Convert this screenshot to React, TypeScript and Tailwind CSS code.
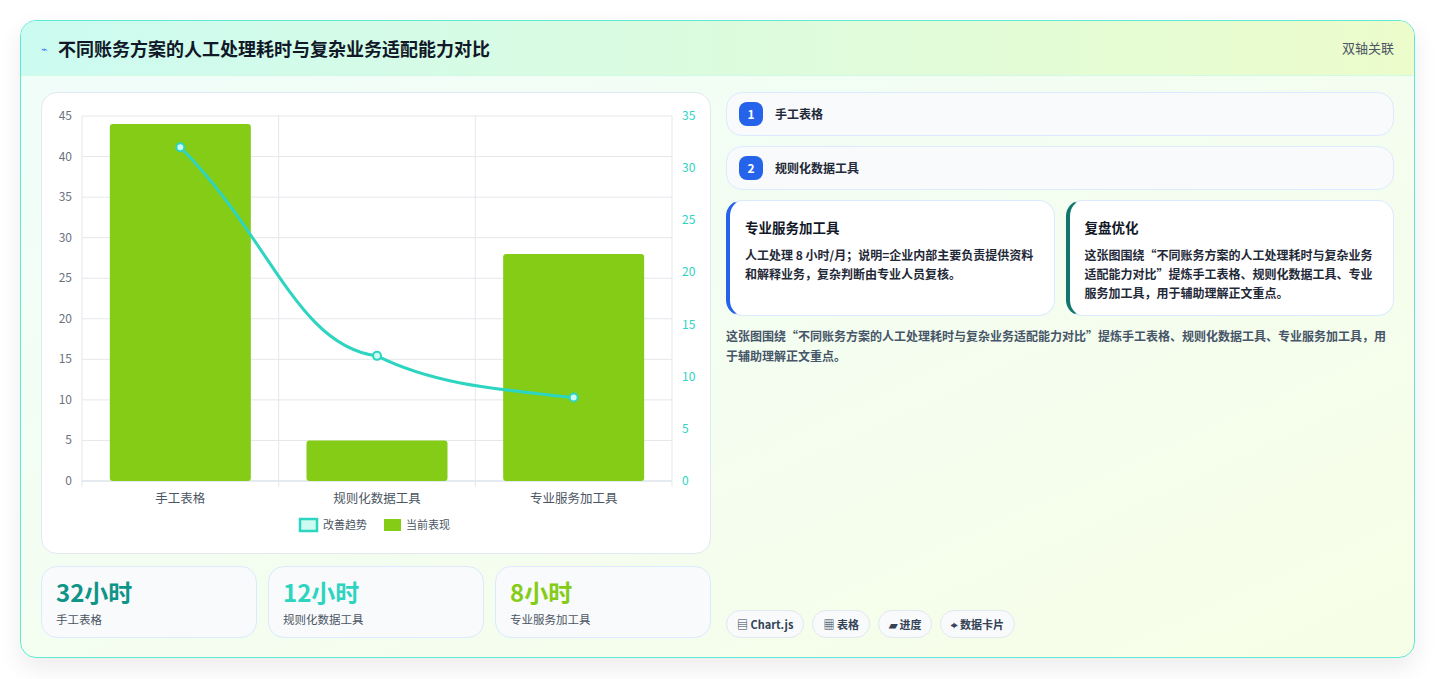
const font = { fontFamily: '"Noto Sans CJK SC", "Noto Sans", sans-serif' };

const Chart = () => {
  const x0 = 40, x1 = 630, yb = 388, yt = 23;
  const ly = (v: number) => yb - (v / 45) * (yb - yt);
  const ry = (v: number) => yb - (v / 35) * (yb - yt);
  const cats = ["手工表格", "规则化数据工具", "专业服务加工具"];
  const bars = [44, 5, 28];
  const line = [32, 12, 8];
  const cw = (x1 - x0) / 3;
  const cx = (i: number) => x0 + cw * i + cw / 2;
  const pts = line.map((v, i) => [cx(i), ry(v)]);
  return (
    <svg width="670" height="462" className="block">
      {[0, 5, 10, 15, 20, 25, 30, 35, 40, 45].map((v) => (
        <g key={v}>
          <line x1={x0} x2={x1} y1={ly(v)} y2={ly(v)} stroke={v === 0 ? "#cbd5e1" : "#e5e7eb"} />
          <text x={x0 - 10} y={ly(v) + 4} textAnchor="end" fontSize="12" fill="#6b7280" style={font}>{v}</text>
        </g>
      ))}
      {[0, 5, 10, 15, 20, 25, 30, 35].map((v) => (
        <text key={v} x={x1 + 10} y={ry(v) + 4} fontSize="12" fill="#2dd4bf" style={font}>{v}</text>
      ))}
      {[0, 1, 2, 3].map((i) => (
        <line key={i} x1={x0 + cw * i} x2={x0 + cw * i} y1={yt} y2={yb + 6} stroke="#e5e7eb" />
      ))}
      {bars.map((v, i) => (
        <rect key={i} x={cx(i) - 70.5} y={ly(v)} width="141" height={yb - ly(v)} rx="3" fill="#84cc16" />
      ))}
      <path
        d={`M${pts[0][0]},${pts[0][1]} C${pts[0][0] + 90},${pts[0][1] + 90} ${pts[1][0] - 80},${pts[1][1] - 10} ${pts[1][0]},${pts[1][1]} C${pts[1][0] + 60},${pts[1][1] + 30} ${pts[2][0] - 70},${pts[2][1] - 8} ${pts[2][0]},${pts[2][1]}`}
        fill="none" stroke="#2dd4bf" strokeWidth="3"
      />
      {pts.map((p, i) => (
        <circle key={i} cx={p[0]} cy={p[1]} r="4" fill="#ccfbf1" stroke="#2dd4bf" strokeWidth="2" />
      ))}
      {cats.map((c, i) => (
        <text key={c} x={cx(i)} y={410} textAnchor="middle" fontSize="12.5" fill="#4b5563" style={font}>{c}</text>
      ))}
      <rect x="258" y="426" width="17" height="12" fill="#ccfbf1" stroke="#2dd4bf" strokeWidth="2.5" />
      <text x="281" y="436" fontSize="11" fill="#4b5563" style={font}>改善趋势</text>
      <rect x="342" y="426" width="17" height="12" fill="#84cc16" />
      <text x="364" y="436" fontSize="11" fill="#4b5563" style={font}>当前表现</text>
    </svg>
  );
};

export default function App() {
  const stats = [
    { v: "32小时", l: "手工表格", c: "text-[#0f9488]" },
    { v: "12小时", l: "规则化数据工具", c: "text-[#2dd4bf]" },
    { v: "8小时", l: "专业服务加工具", c: "text-[#84cc16]" },
  ];
  return (
    <div className="w-[1435px] h-[679px] bg-white pt-5 px-5" style={font}>
      <div className="h-[638px] rounded-2xl border border-[#5eead4] overflow-hidden bg-gradient-to-br from-[#f0fdfa] to-[#f7fee7] shadow-[0_10px_25px_rgba(0,0,0,0.08)] flex flex-col">
        <div className="h-[55px] flex items-center justify-between px-5 bg-gradient-to-r from-[#ccfbf1] to-[#ecfccb] border-b border-[#d1fae5]">
          <div className="flex items-center gap-2.5">
            <span className="text-[#3b82f6] text-[11px]">⌁</span>
            <h1 className="text-[18px] font-bold text-[#111827]">不同账务方案的人工处理耗时与复杂业务适配能力对比</h1>
          </div>
          <span className="text-[13px] text-[#4b5563]">双轴关联</span>
        </div>
        <div className="flex gap-[15px] px-5 pt-4 flex-1">
          <div className="w-[670px] flex flex-col gap-3">
            <div className="h-[462px] bg-white rounded-2xl border border-[#e2e8f0]">
              <Chart />
            </div>
            <div className="grid grid-cols-3 gap-[11px]">
              {stats.map((s) => (
                <div key={s.l} className="h-[72px] rounded-2xl bg-[#f8fafc] border border-[#dbeafe] px-[14px] pt-2">
                  <div className={`text-[24px] font-bold leading-[34px] ${s.c}`}>{s.v}</div>
                  <div className="text-[11.5px] text-[#4b5563] mt-0.5">{s.l}</div>
                </div>
              ))}
            </div>
          </div>
          <div className="w-[670px] flex flex-col">
            {["手工表格", "规则化数据工具"].map((t, i) => (
              <div key={t} className="h-[44px] mb-[10px] rounded-2xl bg-[#f8fafc] border border-[#dbeafe] flex items-center px-3 gap-3">
                <span className="w-[24px] h-[24px] rounded-lg bg-[#2563eb] text-white text-[12px] font-bold flex items-center justify-center">{i + 1}</span>
                <span className="text-[12px] font-semibold text-[#1f2937]">{t}</span>
              </div>
            ))}
            <div className="grid grid-cols-2 gap-[11px]">
              <div className="h-[116px] rounded-2xl bg-white border border-[#dbeafe] border-l-4 border-l-[#2563eb] pl-[15px] pr-3 pt-4">
                <div className="text-[13.5px] font-bold text-[#111827]">专业服务加工具</div>
                <p className="mt-2 text-[12px] leading-[19px] font-semibold text-[#1f2937]">人工处理 8 小时/月；说明=企业内部主要负责提供资料和解释业务，复杂判断由专业人员复核。</p>
              </div>
              <div className="h-[116px] rounded-2xl bg-white border border-[#dbeafe] border-l-4 border-l-[#0f766e] pl-[15px] pr-3 pt-4">
                <div className="text-[13.5px] font-bold text-[#111827]">复盘优化</div>
                <p className="mt-2 text-[12px] leading-[19px] font-semibold text-[#1f2937]">这张图围绕“不同账务方案的人工处理耗时与复杂业务适配能力对比”提炼手工表格、规则化数据工具、专业服务加工具，用于辅助理解正文重点。</p>
              </div>
            </div>
            <p className="mt-[10px] text-[12px] leading-[20px] font-semibold text-[#475569]">这张图围绕“不同账务方案的人工处理耗时与复杂业务适配能力对比”提炼手工表格、规则化数据工具、专业服务加工具，用于辅助理解正文重点。</p>
            <div className="mt-auto mb-[19px] flex gap-2">
              {["▤ Chart.js", "▦ 表格", "▰ 进度", "⌖ 数据卡片"].map((c) => (
                <span key={c} className="h-[28px] px-2.5 rounded-full bg-[#f8fafc] border border-[#e2e8f0] text-[11px] font-semibold text-[#334155] flex items-center">{c}</span>
              ))}
            </div>
          </div>
        </div>
      </div>
    </div>
  );
}
